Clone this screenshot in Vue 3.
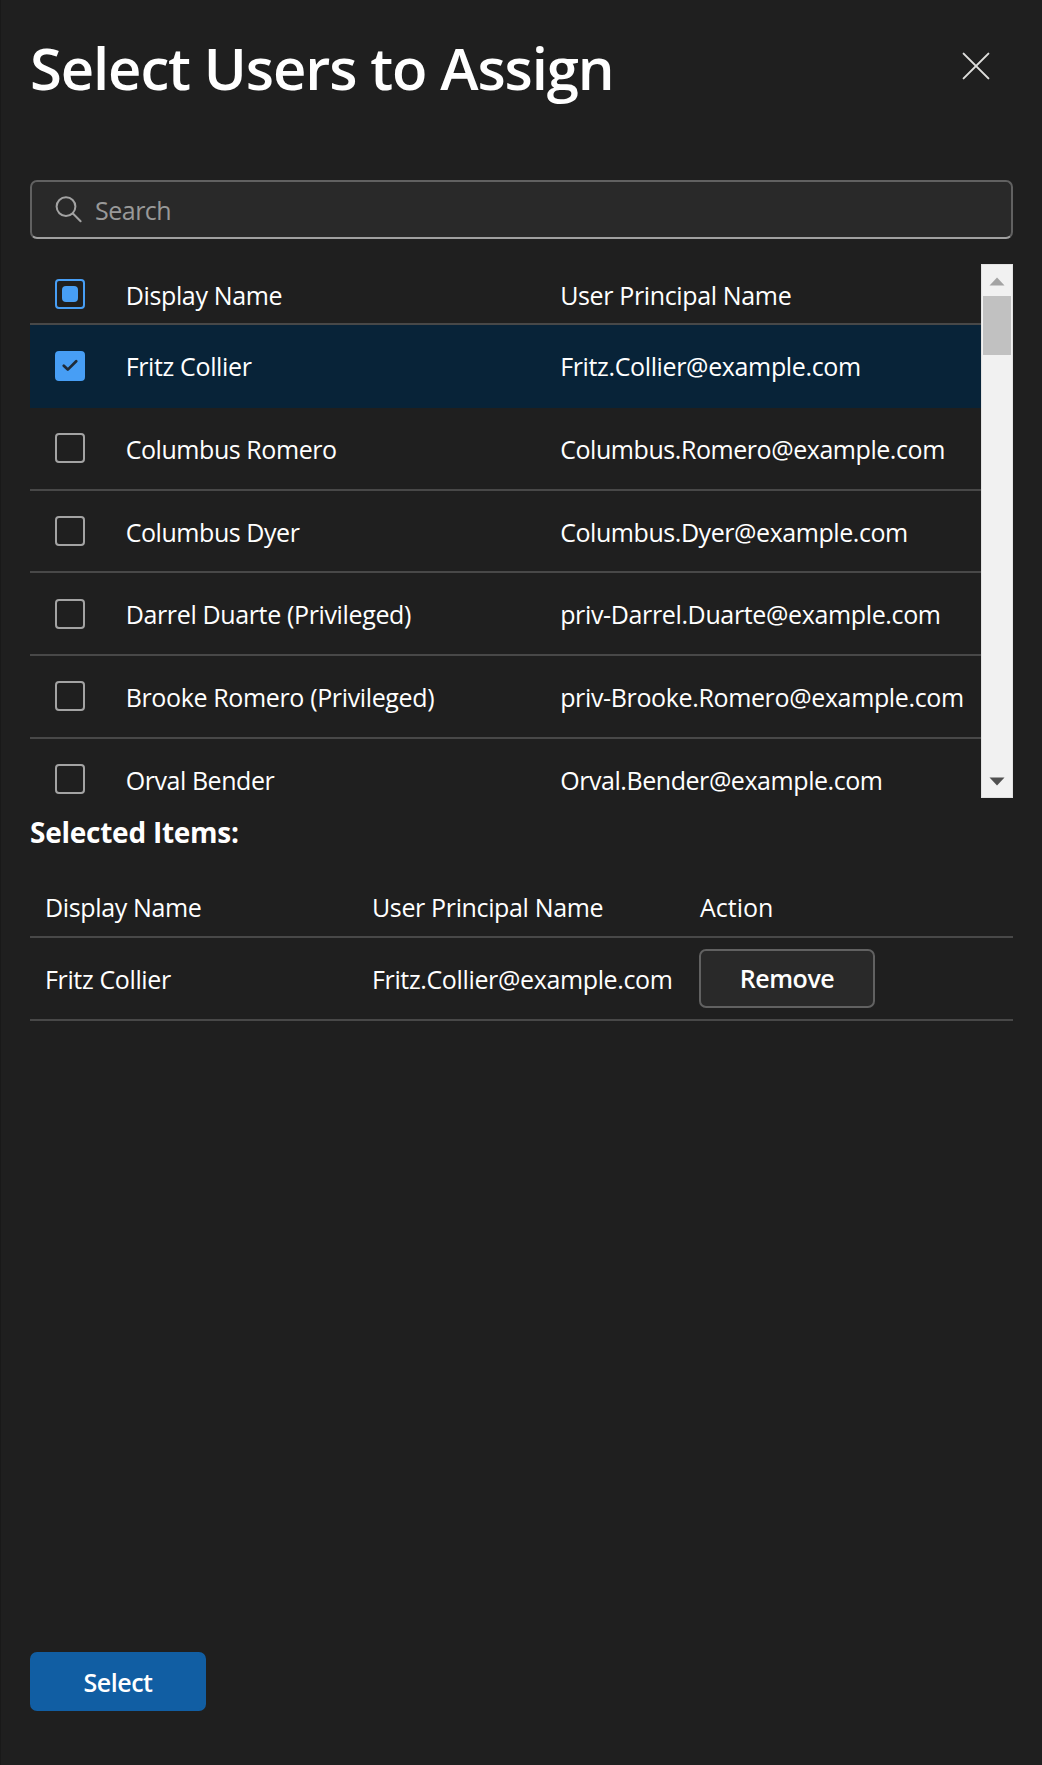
<script setup>
import { ref, computed } from 'vue'

const query = ref('')

const users = ref([
  { name: 'Fritz Collier', upn: 'Fritz.Collier@example.com', selected: true },
  { name: 'Columbus Romero', upn: 'Columbus.Romero@example.com', selected: false, tight: true },
  { name: 'Columbus Dyer', upn: 'Columbus.Dyer@example.com', selected: false, tight: true },
  { name: 'Darrel Duarte (Privileged)', upn: 'priv-Darrel.Duarte@example.com', selected: false },
  { name: 'Brooke Romero (Privileged)', upn: 'priv-Brooke.Romero@example.com', selected: false },
  { name: 'Orval Bender', upn: 'Orval.Bender@example.com', selected: false, tight: true },
])

const selectedUsers = computed(() => users.value.filter((u) => u.selected))
</script>

<template>
  <div class="panel">
    <header class="head">
      <h1>Select Users to Assign</h1>
      <button class="close" aria-label="Close">
        <svg width="28" height="28" viewBox="0 0 28 28" fill="none" stroke="#dededc" stroke-width="2" stroke-linecap="round">
          <path d="M1.6 1.6 26.4 26.4M26.4 1.6 1.6 26.4" />
        </svg>
      </button>
    </header>

    <label class="search">
      <svg width="28" height="28" viewBox="0 0 28 28" fill="none" stroke="#a3a3a3" stroke-width="2" stroke-linecap="round">
        <circle cx="11" cy="10.6" r="9.4" />
        <path d="M17.9 17.5 25.6 25.2" />
      </svg>
      <input v-model="query" type="text" placeholder="Search" />
    </label>

    <section class="list">
      <div class="grid">
        <div class="row header-row">
          <span class="check mixed"><i></i></span>
          <span class="name">Display Name</span>
          <span class="upn">User Principal Name</span>
        </div>
        <div
          v-for="user in users"
          :key="user.upn"
          class="row"
          :class="{ selected: user.selected, tight: user.tight }"
          @click="user.selected = !user.selected"
        >
          <span class="check" :class="{ on: user.selected }">
            <svg v-if="user.selected" width="16" height="13" viewBox="0 0 16 13" fill="none" stroke="#1f2b38" stroke-width="2.7" stroke-linecap="round" stroke-linejoin="round">
              <path d="M1.8 6.8 5.8 10.6 14.2 2.2" />
            </svg>
          </span>
          <span class="name">{{ user.name }}</span>
          <span class="upn">{{ user.upn }}</span>
        </div>
      </div>
      <div class="scrollbar">
        <svg class="arrow" width="16" height="9" viewBox="0 0 16 9"><path d="M8 0.5 15.5 8.5H0.5Z" fill="#a3a3a3" /></svg>
        <div class="thumb"></div>
        <svg class="arrow down" width="16" height="9" viewBox="0 0 16 9"><path d="M8 8.5 15.5 0.5H0.5Z" fill="#505050" /></svg>
      </div>
    </section>

    <h2>Selected Items:</h2>

    <section class="chosen">
      <div class="crow chead">
        <span>Display Name</span>
        <span>User Principal Name</span>
        <span class="action">Action</span>
      </div>
      <div v-for="user in selectedUsers" :key="user.upn" class="crow">
        <span class="cell">{{ user.name }}</span>
        <span class="cell">{{ user.upn }}</span>
        <span><button class="btn" @click="user.selected = false">Remove</button></span>
      </div>
    </section>

    <footer>
      <button class="btn primary">Select</button>
    </footer>
  </div>
</template>

<style>
body {
  background: #1f1f1f;
}
</style>

<style scoped>
* {
  box-sizing: border-box;
}
.panel {
  width: 100%;
  height: 1765px;
  padding: 0 29px 54px;
  display: flex;
  flex-direction: column;
  background: #1f1f1f;
  border-left: 1px solid #191919;
  color: #fff;
  font-family: 'Open Sans', 'Noto Sans', sans-serif;
  font-size: 25px;
  letter-spacing: -0.36px;
  white-space: nowrap;
}
.head {
  height: 180px;
  flex: none;
  display: flex;
  justify-content: space-between;
  align-items: flex-start;
}
h1 {
  margin: 28px 0 0;
  font-size: 58px;
  line-height: 80px;
  font-weight: 600;
  letter-spacing: -1.12px;
}
.close {
  margin: 52px 23px 0 0;
  padding: 0;
  border: 0;
  background: none;
  line-height: 0;
}
.search {
  height: 59px;
  flex: none;
  display: flex;
  align-items: center;
  padding: 0 23px;
  border: 2px solid #616161;
  border-bottom-color: #a0a0a0;
  border-radius: 7px;
  background: #292929;
}
.search input {
  flex: 1;
  min-width: 0;
  margin-left: 12px;
  padding: 0;
  border: 0;
  outline: 0;
  background: none;
  color: #fff;
  font: inherit;
  letter-spacing: -0.5px;
}
.search input::placeholder {
  color: #999;
  opacity: 1;
}
.list {
  height: 533.6px;
  margin-top: 25.4px;
  flex: none;
  display: flex;
  overflow: hidden;
}
.grid {
  flex: 1;
}
.row {
  height: 82.7px;
  display: flex;
  align-items: center;
  padding-left: 25px;
  border-bottom: 2px solid #484848;
}
.header-row {
  height: 61px;
}
.row.selected {
  background: #082338;
  border-bottom-color: #082338;
}
.check {
  width: 30px;
  height: 30px;
  flex: none;
  display: flex;
  align-items: center;
  justify-content: center;
  border: 2px solid #a3a3a3;
  border-radius: 4px;
}
.check.mixed {
  border-color: #479ef5;
}
.check.mixed i {
  width: 16px;
  height: 16px;
  border-radius: 4px;
  background: #479ef5;
}
.check.on {
  border-color: #479ef5;
  background: #479ef5;
}
.name {
  width: 434.5px;
  margin-left: 40.7px;
}
.row .name,
.row .upn {
  line-height: 34px;
  padding-top: 1px;
}
.header-row .name,
.header-row .upn {
  padding-top: 3px;
}
.tight {
  letter-spacing: -0.44px;
}
.scrollbar {
  width: 32px;
  display: flex;
  flex-direction: column;
  align-items: center;
  padding: 12px 0 11px;
  background: #f1f1f1;
  border: 1px solid #e2e2e2;
}
.arrow {
  flex: none;
}
.thumb {
  width: 28px;
  height: 59px;
  margin-top: 10px;
  background: #c1c1c1;
}
.arrow.down {
  margin-top: auto;
}
h2 {
  margin: 15px 0 0;
  font-size: 28px;
  line-height: 38px;
  font-weight: 700;
  letter-spacing: -0.25px;
}
.chosen {
  margin-top: 27px;
}
.crow {
  height: 82.7px;
  display: grid;
  grid-template-columns: 327px 327px 1fr;
  align-items: center;
  padding-left: 15px;
  border-bottom: 2px solid #484848;
}
.chead {
  height: 60px;
}
.action {
  padding-left: 1px;
  letter-spacing: 0;
}
.cell {
  padding-top: 1px;
}
.btn {
  width: 176px;
  height: 59px;
  display: block;
  padding: 0;
  border: 2px solid #616161;
  border-radius: 7px;
  background: #292929;
  color: #fff;
  font: 600 25px / 34px 'Open Sans', 'Noto Sans', sans-serif;
  letter-spacing: -0.45px;
}
.btn.primary {
  border-color: #115ea3;
  background: #115ea3;
}
footer {
  margin-top: auto;
}
</style>
